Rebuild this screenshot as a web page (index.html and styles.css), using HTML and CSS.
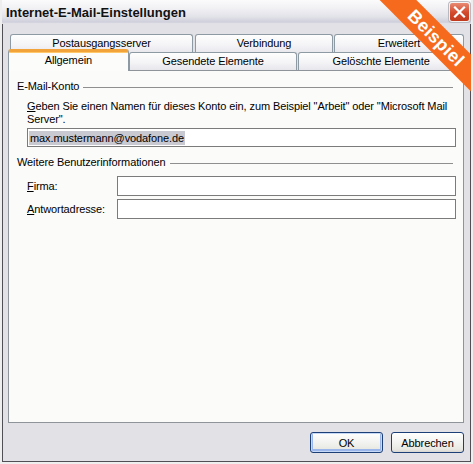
FILE: index.html
```html
<!DOCTYPE html>
<html lang="de">
<head>
<meta charset="utf-8">
<title>Internet-E-Mail-Einstellungen</title>
<link rel="stylesheet" href="styles.css">
</head>
<body>
<div class="window">
  <div class="titlebar">
    <span class="title">Internet-E-Mail-Einstellungen</span>
    <span class="close" aria-label="Schließen">
      <svg width="13" height="12" viewBox="0 0 13 12"><path d="M2 1.5 L11 10.5 M11 1.5 L2 10.5" stroke="#fff" stroke-width="2.2" stroke-linecap="square"/></svg>
    </span>
  </div>
  <div class="frame">
    <div class="tabs">
      <div class="tabrow row1">
        <div class="tab t-post">Postausgangsserver</div>
        <div class="tab t-verb">Verbindung</div>
        <div class="tab t-erw">Erweitert</div>
      </div>
      <div class="tabrow row2">
        <div class="tab active t-allg">Allgemein</div>
        <div class="tab t-ges">Gesendete Elemente</div>
        <div class="tab t-gel">Gelöschte Elemente</div>
      </div>
    </div>
    <div class="panel">
      <div class="group-head"><span>E-Mail-Konto</span><i class="rule"></i></div>
      <p class="desc"><u>G</u>eben Sie einen Namen für dieses Konto ein, zum Beispiel "Arbeit" oder "Microsoft Mail<br>Server".</p>
      <div class="field wide"><span class="sel">max.mustermann@vodafone.de</span></div>
      <div class="group-head second"><span>Weitere Benutzerinformationen</span><i class="rule"></i></div>
      <div class="row first"><span class="label"><u>F</u>irma:</span><div class="field"></div></div>
      <div class="row"><span class="label"><u>A</u>ntwortadresse:</span><div class="field"></div></div>
    </div>
    <div class="buttons">
      <button class="btn default">OK</button>
      <button class="btn">Abbrechen</button>
    </div>
  </div>
  <div class="ribbon">Beispiel</div>
</div>
</body>
</html>
```

FILE: styles.css
```css
* { box-sizing: border-box; }
html, body { margin: 0; padding: 0; background: #ececec; }
body {
  font-family: "Liberation Sans", Arial, sans-serif;
  font-size: 11px;
  letter-spacing: -0.1px;
  color: #000;
}
.window {
  position: relative;
  width: 473px;
  height: 464px;
  overflow: hidden;
  background: #ededed;
  border: solid #eeeeee;
  border-width: 0 2px 2px 2px;
  display: flex;
  flex-direction: column;
}
.titlebar {
  height: 24px;
  flex: none;
  margin: 0 -2px;
  display: flex;
  align-items: center;
  justify-content: space-between;
  padding: 0 3px 0 6px;
  background: linear-gradient(#fbfbfc 0%, #f1f1f4 35%, #e2e2e9 70%, #cfcfdb 92%, #e6e6ea 100%);
}
.title {
  font-weight: bold;
  font-size: 13px;
  color: #111;
  letter-spacing: 0;
}
.close {
  width: 21px;
  height: 20px;
  display: flex;
  align-items: center;
  justify-content: center;
  border: 1px solid #f4f4f4;
  border-radius: 3px;
  background: linear-gradient(#e88a74, #d2492b 55%, #c13a1e);
  box-shadow: 0 0 0 1px #b8b8c0;
}
.frame {
  flex: 1;
  display: flex;
  flex-direction: column;
  background: #e2e1e6;
  border: solid #4f4f55;
  border-width: 0 1px 1px 1px;
  padding: 10px 6px 0 5px;
}
.tabs {
  height: 36px;
  flex: none;
}
.tabrow { display: flex; }
.row1 {
  height: 19px;
  padding-left: 2px;
}
.row2 {
  height: 20px;
  margin-top: -3px;
  align-items: flex-end;
}
.tab {
  text-align: center;
  line-height: 17px;
  background: linear-gradient(#fefefe, #f3f3f6 60%, #e6e6ec);
  border: 1px solid #8e9aa3;
  border-bottom: none;
  border-radius: 3px 3px 0 0;
  white-space: nowrap;
}
.row1 .tab { height: 19px; }
.row2 .tab { height: 18px; }
.t-post { width: 183px; margin-right: 2px; }
.t-verb { width: 138px; margin-right: 1px; }
.t-erw { width: 130px; }
.t-allg { width: 121px; margin-right: 0; }
.t-ges { width: 169px; margin-right: 1px; }
.t-gel { width: 166px; }
.row2 .tab.active {
  position: relative;
  z-index: 2;
  height: 22px;
  margin-bottom: -1px;
  line-height: 16px;
  background: #fcfcfb;
  border-color: #8e9aa3;
  border-top: 3px solid #f2a33a;
  box-shadow: inset 0 1px 0 #ffc86a;
}
.panel {
  flex: none;
  height: 353px;
  background: #fbfbfa;
  border: 1px solid #8e9499;
  padding: 9px 7px 0 8px;
}
.group-head {
  display: flex;
  align-items: center;
  line-height: 13px;
  margin-right: 3px;
}
.group-head .rule {
  flex: 1;
  height: 1px;
  background: #8f8f8f;
  margin-left: 4px;
  margin-top: 1px;
}
.group-head.second { margin-top: 9px; }
.desc {
  margin: 7px 0 0 10px;
  line-height: 13px;
  white-space: nowrap;
}
.field {
  height: 20px;
  border: 1px solid #7b7b7b;
  background: #fff;
  padding: 0 1px;
  display: flex;
  align-items: center;
}
.field.wide {
  margin: 2px 0 0 10px;
  height: 19px;
}
.sel {
  background: #c9c9d2;
  line-height: 14px;
  padding: 0 1px;
}
.row {
  display: flex;
  align-items: center;
  margin: 3px 0 0 10px;
}
.row.first { margin-top: 7px; }
.row .label { width: 90px; flex: none; }
.row .field { flex: 1; }
.buttons {
  display: flex;
  justify-content: flex-end;
  gap: 8px;
  padding-top: 9px;
}
.btn {
  width: 73px;
  height: 21px;
  font-family: inherit;
  font-size: 11px;
  letter-spacing: -0.1px;
  color: #000;
  border: 1px solid #1c3f78;
  border-radius: 3px;
  background: linear-gradient(#ffffff, #f4f4f2 45%, #e9e8e3 85%, #d8d6cf);
  padding: 0;
}
.btn.default {
  box-shadow: inset 0 0 0 1px #c6d9f7, inset 0 -1px 0 2px #9bb6ea;
}
.ribbon {
  position: absolute;
  left: 334px;
  top: 25px;
  width: 200px;
  height: 26px;
  line-height: 26px;
  background: #f66a1d;
  color: #fff;
  font-weight: bold;
  font-size: 18px;
  text-align: center;
  letter-spacing: 0.3px;
  transform: rotate(45deg);
  z-index: 10;
}
```
